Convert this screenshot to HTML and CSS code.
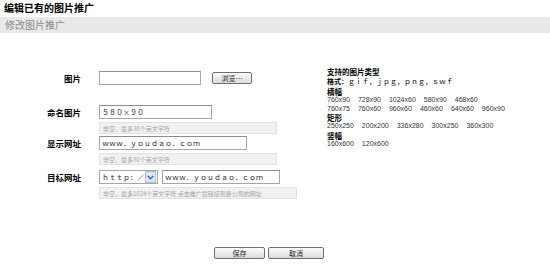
FILE: index.html
```html
<!DOCTYPE html>
<html lang="zh-CN">
   <head>
      <meta charset="UTF-8" />
      <title>编辑已有的图片推广</title>
      <link rel="stylesheet" href="styles.css">
   </head>
   <body>
      <h1 class="title">编辑已有的图片推广</h1>
      <div class="subbar">修改图片推广</div>

      <div class="main">
         <div class="form">
            <div class="row">
               <label class="label">图片</label>
               <div class="field">
                  <div class="line">
                     <input class="text w-file" type="text" />
                     <button class="btn browse">浏览…</button>
                  </div>
               </div>
            </div>
            <div class="row row-name">
               <label class="label">命名图片</label>
               <div class="field">
                  <input class="text w-name" type="text" value="５８０×９０" />
                  <div class="hint w-hint">非空，最多30个英文字符</div>
               </div>
            </div>
            <div class="row row-show">
               <label class="label">显示网址</label>
               <div class="field">
                  <input class="text w-show" type="text" value="ｗｗｗ．ｙｏｕｄａｏ．ｃｏｍ" />
                  <div class="hint w-hint">非空，最多30个英文字符</div>
               </div>
            </div>
            <div class="row row-target">
               <label class="label">目标网址</label>
               <div class="field">
                  <div class="line">
                     <div class="select">
                        <span class="select-text">ｈｔｔｐ：／</span>
                        <span class="select-arrow">
                           <svg width="7" height="5" viewBox="0 0 7 5"><path d="M0.8 1 L3.5 3.8 L6.2 1" fill="none" stroke="#3f68b0" stroke-width="1.4"/></svg>
                        </span>
                     </div>
                     <input class="text w-url" type="text" value="ｗｗｗ．ｙｏｕｄａｏ．ｃｏｍ" />
                  </div>
                  <div class="hint w-hint-long">非空，最多1024个英文字符 点击推广后链接到贵公司的网址</div>
               </div>
            </div>
         </div>

         <div class="info">
            <div class="info-head">支持的图片类型</div>
            <div class="format"><b>格式：</b><span class="wide">ｇｉｆ，ｊｐｇ，ｐｎｇ，ｓｗｆ</span></div>
            <div class="info-head">横幅</div>
            <div class="sizes"><span>760x90</span><span>728x90</span><span>1024x60</span><span>580x90</span><span>468x60</span></div>
            <div class="sizes"><span>760x75</span><span>760x60</span><span>960x60</span><span>460x60</span><span>640x60</span><span>960x90</span></div>
            <div class="info-head">矩形</div>
            <div class="sizes"><span>250x250</span><span>200x200</span><span>336x280</span><span>300x250</span><span>360x300</span></div>
            <div class="info-head">竖幅</div>
            <div class="sizes"><span>160x600</span><span>120x600</span></div>
         </div>
      </div>

      <div class="footer">
         <button class="btn save">保存</button>
         <button class="btn cancel">取消</button>
      </div>
   </body>
</html>
```

FILE: styles.css
```css
body {
   margin: 0;
   padding: 0;
   background: #fff;
   color: #000;
   font-family: 'Noto Sans CJK SC', sans-serif;
}

h1.title {
   margin: 0;
   padding: 0 4px;
   height: 17px;
   line-height: 16px;
   font-size: 10px;
   font-weight: bold;
}

div.subbar {
   height: 16px;
   line-height: 16px;
   padding-left: 5px;
   background-color: #e9e9e9;
   color: #8c8c8c;
   font-size: 10px;
}

div.main {
   display: flex;
   align-items: flex-start;
   margin-top: 34px;
}

div.form {
   width: 327px;
   flex: none;
   padding-top: 4px;
}

div.row {
   display: flex;
   align-items: flex-start;
}

div.row-name {
   margin-top: 20px;
}

div.row-show {
   margin-top: 2px;
}

div.row-target {
   margin-top: 5px;
}

label.label {
   width: 81px;
   height: 14px;
   line-height: 14px;
   text-align: right;
   font-size: 8.5px;
   font-weight: bold;
}

div.field {
   margin-left: 18px;
   display: flex;
   flex-direction: column;
   align-items: flex-start;
}

div.line {
   display: flex;
   align-items: center;
}

input.text {
   box-sizing: border-box;
   height: 14px;
   margin: 0;
   padding: 0 2px;
   border: 1px solid #a7a7a7;
   border-top-color: #8f8f8f;
   background: #fff;
   font-family: 'Noto Sans CJK SC', sans-serif;
   font-size: 7px;
   color: #222;
   outline: none;
}

.w-file {
   width: 102px;
}

.w-name {
   width: 113px;
}

.w-show {
   width: 148px;
}

.w-url {
   width: 118px;
   margin-left: 4px !important;
}

div.hint {
   box-sizing: border-box;
   height: 12px;
   line-height: 11px;
   margin-top: 3px;
   padding-left: 3px;
   background-color: #f1f1f1;
   border: 1px solid #e2e2e2;
   color: #a3a3a3;
   font-size: 6px;
   white-space: nowrap;
}

.w-hint {
   width: 178px;
}

.w-hint-long {
   width: 198px;
}

div.select {
   box-sizing: border-box;
   width: 59px;
   height: 14px;
   display: flex;
   align-items: center;
   border: 1px solid #a7a7a7;
   background: #fff;
   font-size: 7px;
   color: #222;
}

span.select-text {
   flex: 1;
   padding-left: 2px;
   line-height: 12px;
}

span.select-arrow {
   width: 9px;
   height: 10px;
   margin-right: 1px;
   display: flex;
   justify-content: center;
   align-items: center;
   background-color: #d9e5f6;
   border: 1px solid #a8bfe3;
}

button.btn {
   box-sizing: border-box;
   height: 12px;
   padding: 0;
   border: 1px solid #6f6f6f;
   border-radius: 2px;
   background: linear-gradient(#fbfbfb, #dcdcdc);
   font-family: 'Noto Sans CJK SC', sans-serif;
   font-size: 7px;
   line-height: 10px;
   color: #222;
}

button.browse {
   width: 40px;
   margin-left: 11px;
}

div.info {
   font-size: 7.5px;
   line-height: 9px;
}

div.info-head {
   font-weight: bold;
}

div.format {
   margin: 1px 0;
   font-size: 7px;
}

div.sizes {
   display: flex;
   gap: 8px;
   line-height: 8.5px;
   font-family: 'Liberation Sans', Arial, sans-serif;
   font-size: 7px;
   color: #333;
}

div.footer {
   display: flex;
   justify-content: center;
   gap: 3px;
   padding-right: 12px;
   margin-top: 48px;
}

button.save {
   width: 51px;
}

button.cancel {
   width: 56px;
}
```
